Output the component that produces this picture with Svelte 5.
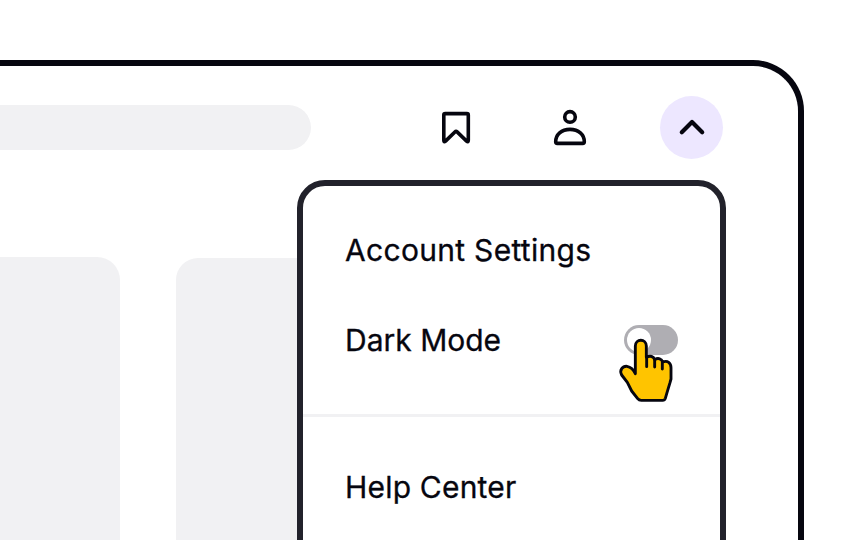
<script>
  let dark = $state(false);
</script>

<div class="stage">
  <div class="window">
    <header>
      <div class="search"></div>
      <nav>
        <button class="icon" aria-label="Bookmarks">
          <svg width="36" height="40" viewBox="438 108 36 40">
            <path d="M445.3 113.6H466.9Q468.3 113.6 468.3 115V140.3Q468.3 142.6 466.6 141.1L457.1 131.9Q456 130.8 454.9 131.9L445.5 141.1Q443.8 142.6 443.8 140.3V115Q443.8 113.6 445.3 113.6Z" />
          </svg>
        </button>
        <button class="icon" aria-label="Profile">
          <svg width="40" height="44" viewBox="550 106 40 44">
            <circle cx="570" cy="116.9" r="5.3" />
            <path d="M557.3 143.4H582.7Q584.3 143.4 584.3 141.8C584.3 134.5 578.6 129.4 570 129.4S555.7 134.5 555.7 141.8Q555.7 143.4 557.3 143.4Z" />
          </svg>
        </button>
        <button class="round" aria-label="Close menu">
          <svg width="30" height="22" viewBox="676.5 116.5 30 22">
            <path class="chevron" d="M681.3 131.8L691.5 121.6L701.7 131.8" />
          </svg>
        </button>
      </nav>
    </header>
    <main>
      <div class="card first"></div>
      <div class="card second"></div>
    </main>
  </div>

  <div class="menu">
    <div class="group">
      <div class="item account">Account Settings</div>
      <div class="item">
        <span>Dark Mode</span>
        <button class="toggle" class:on={dark} aria-label="Dark Mode" onclick={() => (dark = !dark)}>
          <span class="knob"></span>
        </button>
      </div>
    </div>
    <div class="group help">
      <div class="item">Help Center</div>
    </div>
  </div>

  <svg class="hand" width="90" height="100" viewBox="0 0 270 300">
    <path d="M91 191V108C91 85 124 85 124 108V142C136 136 146 139 149 149C160 142 170 147 173 156C188 150 198 159 198 173V207L195 218L186 248L181 265Q179 271 173 271H109Q102 271 98 266L80 243L67 217L50 195C42 180 53 168 66 169C77 171 86 180 91 191Z" />
    <path d="M125 142V170M149 149V171M172 156V177" />
  </svg>
</div>

<style>
  :global(body) {
    margin: 0;
    background: #fff;
    overflow: hidden;
  }
  .stage {
    position: relative;
    width: 864px;
    height: 540px;
    padding-top: 60px;
    box-sizing: border-box;
    overflow: hidden;
    font-family: Inter, sans-serif;
    color: #06060f;
  }
  .window {
    box-sizing: border-box;
    width: 804px;
    height: 600px;
    border: solid #06060f;
    border-width: 6px 6px 0 0;
    border-top-right-radius: 51px;
  }
  header {
    display: flex;
    align-items: center;
    height: 123px;
    padding-right: 75px;
  }
  .search {
    width: 311px;
    height: 45px;
    border-radius: 0 23px 23px 0;
    background: #f1f1f3;
  }
  nav {
    display: flex;
    align-items: center;
    margin-left: auto;
    gap: 70px;
  }
  nav .icon + .icon {
    margin-left: 6px;
  }
  button {
    display: flex;
    padding: 0;
    border: 0;
    background: none;
    cursor: pointer;
  }
  nav svg {
    fill: none;
    stroke: #06060f;
    stroke-width: 3.6;
    stroke-linejoin: round;
    stroke-linecap: round;
  }
  nav .chevron {
    stroke-width: 4.2;
  }
  .round {
    width: 63px;
    height: 63px;
    border-radius: 50%;
    background: #ede7ff;
    align-items: center;
    justify-content: center;
  }
  main {
    display: flex;
    gap: 56px;
    padding-top: 68px;
  }
  .card {
    height: 400px;
    background: #f1f1f3;
  }
  .first {
    width: 120px;
    border-top-right-radius: 23px;
  }
  .second {
    width: 240px;
    margin-top: 1px;
    border-radius: 22px;
  }
  .menu {
    position: absolute;
    left: 297px;
    top: 180px;
    box-sizing: border-box;
    width: 429px;
    height: 420px;
    border: 6px solid #22222b;
    border-radius: 28px;
    background: #fff;
  }
  .group {
    display: flex;
    flex-direction: column;
    gap: 50px;
    padding: 44px 42px 54px;
  }
  .help {
    border-top: 3px solid #f1f1f3;
    padding-top: 50px;
  }
  .item {
    display: flex;
    justify-content: space-between;
    align-items: center;
    height: 40px;
    font-size: 30px;
    line-height: 40px;
    white-space: nowrap;
    -webkit-text-stroke: 0.3px #06060f;
  }
  .account {
    letter-spacing: 0.3px;
  }
  .help .item {
    letter-spacing: 0.2px;
  }
  .toggle {
    box-sizing: border-box;
    width: 54px;
    height: 30px;
    padding: 3px;
    border-radius: 15px;
    background: #afaeb3;
  }
  .toggle.on {
    justify-content: flex-end;
    background: #06060f;
  }
  .knob {
    width: 24px;
    height: 24px;
    border-radius: 50%;
    background: #fff;
  }
  .hand {
    position: absolute;
    left: 605px;
    top: 310px;
    fill: #ffc400;
    stroke: #06060f;
    stroke-width: 8.6;
    stroke-linejoin: round;
    stroke-linecap: round;
    pointer-events: none;
  }
</style>
